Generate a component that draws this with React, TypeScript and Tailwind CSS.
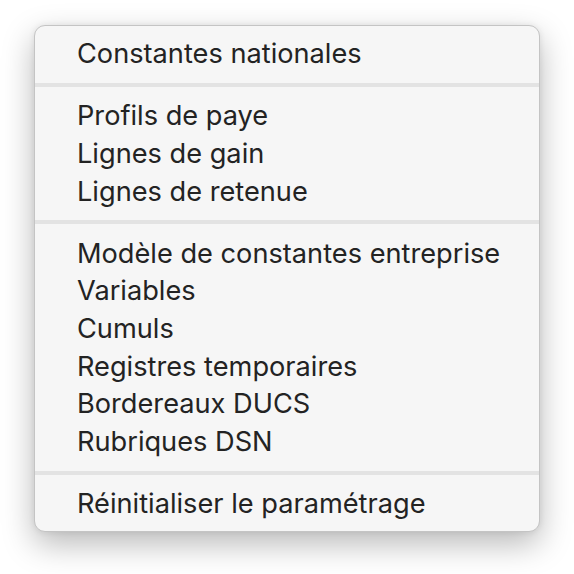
import React from 'react';

type Entry = string | null;

// null = séparateur
const entries: Entry[] = [
    'Constantes nationales',
    null,
    'Profils de paye',
    'Lignes de gain',
    'Lignes de retenue',
    null,
    'Modèle de constantes entreprise',
    'Variables',
    'Cumuls',
    'Registres temporaires',
    'Bordereaux DUCS',
    'Rubriques DSN',
    null,
    'Réinitialiser le paramétrage',
];

export default function App() {
    return (
        <div className="w-[574px] h-[574px] bg-white pt-[25px] pl-[34px]">
            <div
                className="w-[506px] h-[507px] rounded-[11px] bg-[#f6f6f6] border border-[#c4c4c4] shadow-[0_12px_32px_rgba(0,0,0,0.28),0_0_6px_rgba(0,0,0,0.08)] pt-[9px] pb-[8px] text-[#232323]"
                style={{ fontFamily: 'Inter, "Noto Sans", sans-serif' }}
            >
                {entries.map((label, i) =>
                    label === null ? (
                        <div key={i} className="h-[24.3px] flex items-center">
                            <div className="w-full h-[4px] bg-[#e3e3e3]" />
                        </div>
                    ) : (
                        <div key={i} className="h-[37.7px] flex items-center pl-[42px] text-[27.2px] leading-none">
                            {label}
                        </div>
                    )
                )}
            </div>
        </div>
    );
}
